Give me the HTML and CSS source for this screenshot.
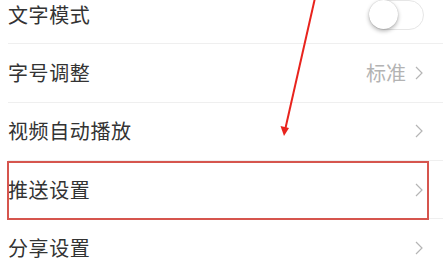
FILE: index.html
```html
<!DOCTYPE html>
<html lang="zh">
<head>
<meta charset="utf-8">
<link rel="stylesheet" href="styles.css">
</head>
<body>
<div class="list">
  <div class="row">
    <span class="label">文字模式</span>
    <span class="toggle"><span class="knob"></span></span>
  </div>
  <div class="row">
    <span class="label">字号调整</span>
    <span class="right"><span class="value">标准</span><svg class="chev" viewBox="0 0 8 14" width="8" height="14"><path d="M1 1 L7 7 L1 13" fill="none" stroke="#b5b5b5" stroke-width="1.2"/></svg></span>
  </div>
  <div class="row">
    <span class="label">视频自动播放</span>
    <span class="right"><svg class="chev" viewBox="0 0 8 14" width="8" height="14"><path d="M1 1 L7 7 L1 13" fill="none" stroke="#b5b5b5" stroke-width="1.2"/></svg></span>
  </div>
  <div class="row">
    <span class="label">推送设置</span>
    <span class="right"><svg class="chev" viewBox="0 0 8 14" width="8" height="14"><path d="M1 1 L7 7 L1 13" fill="none" stroke="#b5b5b5" stroke-width="1.2"/></svg></span>
  </div>
  <div class="row">
    <span class="label">分享设置</span>
    <span class="right"><svg class="chev" viewBox="0 0 8 14" width="8" height="14"><path d="M1 1 L7 7 L1 13" fill="none" stroke="#b5b5b5" stroke-width="1.2"/></svg></span>
  </div>
</div>
<div class="highlight"></div>
<svg class="arrow" width="443" height="269" viewBox="0 0 443 269">
  <line x1="315" y1="-2" x2="285.5" y2="128" stroke="#e8231d" stroke-width="2"/>
  <polygon points="284,136 280.5,126 289,128" fill="#e8231d"/>
</svg>
</body>
</html>
```
FILE: styles.css
```css
html, body {
  margin: 0;
  padding: 0;
  background: #ffffff;
  width: 443px;
  height: 269px;
  overflow: hidden;
  position: relative;
}
body {
  font-family: "Noto Sans CJK SC", "Noto Sans", sans-serif;
}
.list {
  margin-top: -14px;
  padding-left: 8px;
}
.row {
  height: 57.3px;
  border-bottom: 1px solid #efefef;
  display: flex;
  align-items: center;
  justify-content: space-between;
  box-sizing: content-box;
}
.label {
  font-size: 20px;
  color: #333333;
  line-height: 1;
  letter-spacing: 0.6px;
}
.right {
  display: flex;
  align-items: center;
  gap: 9px;
  padding-right: 20px;
}
.value {
  font-size: 20px;
  color: #b3b3b3;
  line-height: 1;
}
.chev {
  display: block;
}
.toggle {
  width: 53px;
  height: 28px;
  border: 1px solid #e6e6e6;
  border-radius: 15px;
  background: #ffffff;
  margin-right: 19px;
  position: relative;
  box-sizing: content-box;
}
.knob {
  position: absolute;
  left: -1px;
  top: -1px;
  width: 29px;
  height: 29px;
  border-radius: 50%;
  background: #ffffff;
  box-shadow: 0 2px 4px rgba(0,0,0,0.3), 0 0 1px rgba(0,0,0,0.25);
}
.highlight {
  position: absolute;
  left: 7px;
  top: 161px;
  width: 418px;
  height: 55px;
  border: 2px solid #d6554e;
}
.arrow {
  position: absolute;
  left: 0;
  top: 0;
}
```
